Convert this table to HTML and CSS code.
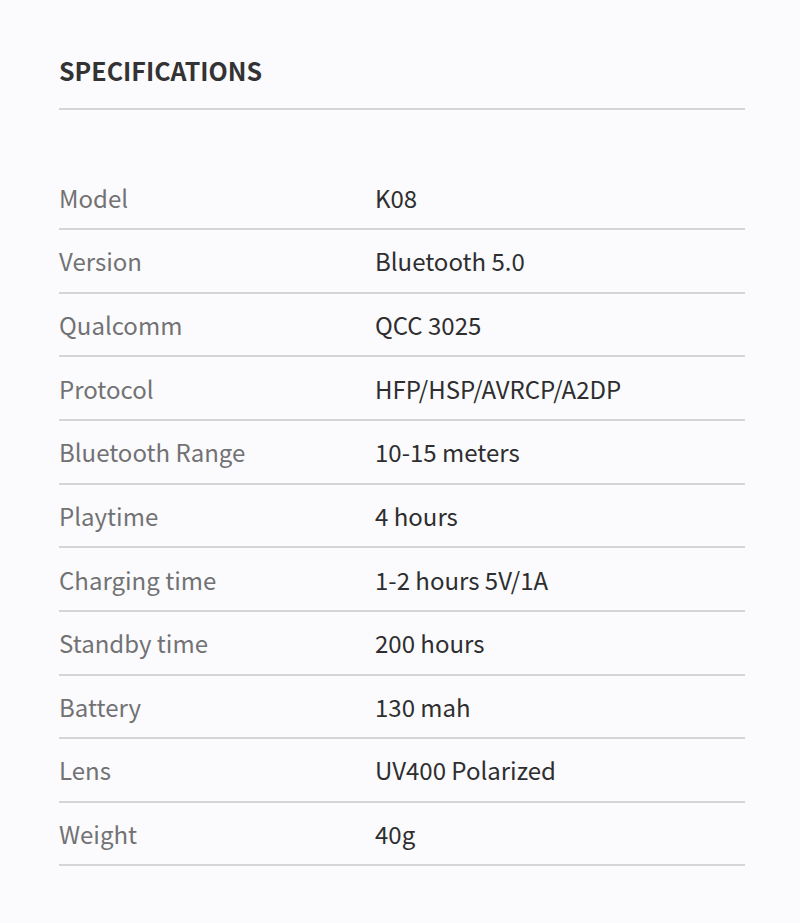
FILE: index.html
```html
<!DOCTYPE html>
<html lang="en">
<head>
<meta charset="utf-8">
<link rel="stylesheet" href="styles.css">
</head>
<body>
<section class="specs">
  <h2 class="specs-title">SPECIFICATIONS</h2>
  <div class="specs-table">
    <div class="row"><span class="label">Model</span><span class="value">K08</span></div>
    <div class="row"><span class="label">Version</span><span class="value">Bluetooth 5.0</span></div>
    <div class="row"><span class="label">Qualcomm</span><span class="value">QCC 3025</span></div>
    <div class="row"><span class="label">Protocol</span><span class="value">HFP/HSP/AVRCP/A2DP</span></div>
    <div class="row"><span class="label">Bluetooth Range</span><span class="value">10-15 meters</span></div>
    <div class="row"><span class="label">Playtime</span><span class="value">4 hours</span></div>
    <div class="row"><span class="label">Charging time</span><span class="value">1-2 hours 5V/1A</span></div>
    <div class="row"><span class="label">Standby time</span><span class="value">200 hours</span></div>
    <div class="row"><span class="label">Battery</span><span class="value">130 mah</span></div>
    <div class="row"><span class="label">Lens</span><span class="value">UV400 Polarized</span></div>
    <div class="row"><span class="label">Weight</span><span class="value">40g</span></div>
  </div>
</section>
</body>
</html>
```
FILE: styles.css
```css
html, body {
  margin: 0;
  padding: 0;
  background: #fbfbfd;
}
body {
  font-family: "Noto Sans CJK SC", "Noto Sans", sans-serif;
  width: 800px;
  height: 923px;
}
.specs {
  padding: 50px 55px 0 59px;
}
.specs-title {
  margin: 0;
  font-size: 25px;
  font-weight: 700;
  color: #333333;
  line-height: 40px;
  padding-bottom: 18px;
  border-bottom: 2px solid #d5d5d7;
}
.specs-table {
  margin-top: 56.4px;
}
.row {
  display: flex;
  align-items: center;
  height: 61.65px;
  border-bottom: 2px solid #d5d5d7;
  font-size: 24px;
  font-weight: 400;
}
.label {
  width: 316px;
  color: #727274;
}
.value {
  color: #2e2e30;
}
```
